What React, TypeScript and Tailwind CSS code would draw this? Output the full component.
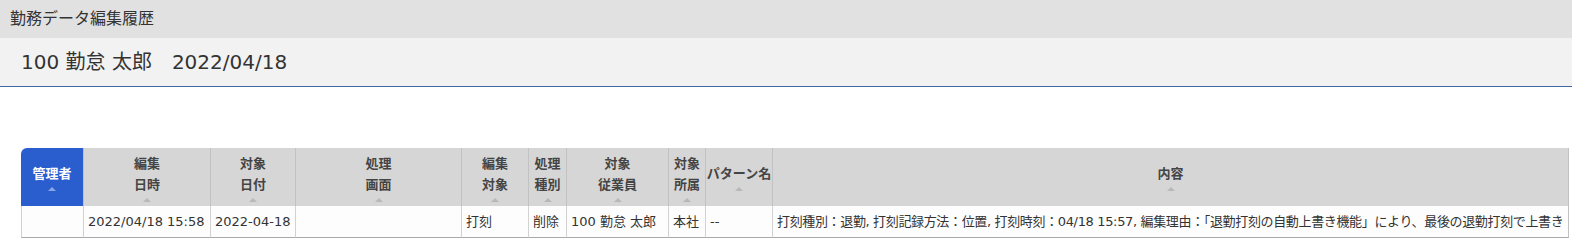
import React from "react";

const FONT = { fontFamily: '"DejaVu Sans", "Noto Sans CJK JP", sans-serif' };

type Col = { lines: string[]; width: number };

const columns: Col[] = [
  { lines: ["管理者"], width: 62 },
  { lines: ["編集", "日時"], width: 127 },
  { lines: ["対象", "日付"], width: 85 },
  { lines: ["処理", "画面"], width: 166 },
  { lines: ["編集", "対象"], width: 67 },
  { lines: ["処理", "種別"], width: 38 },
  { lines: ["対象", "従業員"], width: 102 },
  { lines: ["対象", "所属"], width: 37 },
  { lines: ["パターン名"], width: 67 },
  { lines: ["内容"], width: 797 },
];

const row = [
  "",
  "2022/04/18 15:58",
  "2022-04-18",
  "",
  "打刻",
  "削除",
  "100 勤怠 太郎",
  "本社",
  "--",
  "打刻種別：退勤, 打刻記録方法：位置, 打刻時刻：04/18 15:57, 編集理由：「退勤打刻の自動上書き機能」により、最後の退勤打刻で上書き",
];

function SortArrow({ active }: { active?: boolean }) {
  return (
    <span
      className={`mt-[3px] block h-0 w-0 border-x-[4px] border-b-[4px] border-x-transparent ${
        active ? "border-b-[#8aa6e6]" : "border-b-[#b8b8b8]"
      }`}
    />
  );
}

export default function App() {
  return (
    <div className="min-h-screen bg-white text-[#333]" style={FONT}>
      <div className="flex h-[38px] items-center bg-[#e1e1e1] pl-[10px] text-[16px]">
        勤務データ編集履歴
      </div>
      <div className="flex h-[49px] items-center border-b border-[#3d67a0] bg-[#f2f2f2] pl-[21px] text-[20px]">
        100 勤怠 太郎　2022/04/18
      </div>

      <div className="pl-[21px] pt-[61px]">
        <table className="w-[1548px] table-fixed border-separate border-spacing-0 text-[13px]">
          <colgroup>
            {columns.map((c, i) => (
              <col key={i} style={{ width: c.width }} />
            ))}
          </colgroup>
          <thead>
            <tr>
              {columns.map((c, i) => (
                <th
                  key={i}
                  className={`h-[58px] p-0 align-middle font-bold ${
                    i === 0
                      ? "rounded-tl-[6px] bg-[#2a5ecf] text-white"
                      : "border-l border-[#c2c2c2] bg-[#d6d6d6] text-[#444]"
                  } ${i === columns.length - 1 ? "border-r" : ""}`}
                >
                  <div className="flex flex-col items-center leading-[21px]">
                    {c.lines.map((l, j) => (
                      <span key={j} className="whitespace-nowrap">
                        {l}
                      </span>
                    ))}
                    <SortArrow active={i === 0} />
                  </div>
                </th>
              ))}
            </tr>
          </thead>
          <tbody>
            <tr>
              {row.map((v, i) => (
                <td
                  key={i}
                  className={`h-[32px] overflow-hidden whitespace-nowrap border-b border-l border-b-[#a9a9a9] border-l-[#d2d2d2] bg-[#fdfdfd] px-[4px] align-middle font-normal text-[#333] ${
                    i === row.length - 1
                      ? "border-r border-r-[#c2c2c2] tracking-[-0.35px]"
                      : ""
                  }`}
                >
                  {v}
                </td>
              ))}
            </tr>
          </tbody>
        </table>
      </div>
    </div>
  );
}
